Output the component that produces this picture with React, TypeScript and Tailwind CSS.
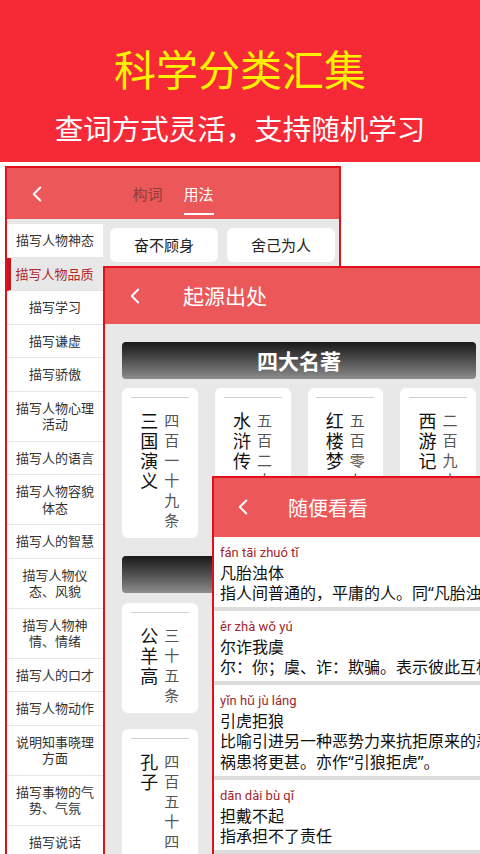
import { ChevronLeft } from 'lucide-react';

const sideItems: string[][] = [
  ['描写人物神态'],
  ['描写人物品质'],
  ['描写学习'],
  ['描写谦虚'],
  ['描写骄傲'],
  ['描写人物心理', '活动'],
  ['描写人的语言'],
  ['描写人物容貌', '体态'],
  ['描写人的智慧'],
  ['描写人物仪', '态、风貌'],
  ['描写人物神', '情、情绪'],
  ['描写人的口才'],
  ['描写人物动作'],
  ['说明知事晓理', '方面'],
  ['描写事物的气', '势、气氛'],
  ['描写说话'],
];

const usages = ['奋不顾身', '舍己为人', '见义勇为', '大公无私', '克己奉公', '刚正不阿'];

const classics = [
  { name: '三国演义', count: '四百一十九条' },
  { name: '水浒传', count: '五百二十一条' },
  { name: '红楼梦', count: '五百零七条' },
  { name: '西游记', count: '二百九十八条' },
];

const ancients = [
  { name: '公羊高', count: '三十五条' },
  { name: '左丘明', count: '三十八条' },
  { name: '墨子', count: '六十二条' },
  { name: '荀子', count: '九十条' },
  { name: '孔子', count: '四百五十四条' },
  { name: '孟子', count: '二百一十条' },
  { name: '庄子', count: '三百零六条' },
  { name: '韩非', count: '一百八十条' },
];

const randomWords = [
  { py: 'fán tāi zhuó tǐ', word: '凡胎浊体', def: ['指人间普通的，平庸的人。同“凡胎浊骨”。'] },
  { py: 'ěr zhà wǒ yú', word: '尔诈我虞', def: ['尔：你；虞、诈：欺骗。表示彼此互相欺骗。'] },
  {
    py: 'yǐn hǔ jù láng',
    word: '引虎拒狼',
    def: ['比喻引进另一种恶势力来抗拒原来的恶势力，结果', '祸患将更甚。亦作“引狼拒虎”。'],
  },
  { py: 'dān dài bù qǐ', word: '担戴不起', def: ['指承担不了责任'] },
];

function BookCard({ name, count }: { name: string; count: string }) {
  return (
    <div className="bg-white rounded-[6px] pt-[9px] pb-[8px]">
      <div className="mx-auto h-px w-[58px] bg-[#cfcfcf]" />
      <div className="mt-[12px] flex justify-center gap-[6px]">
        <div className="flex flex-col text-[18px] leading-[20px] text-[#111]">
          {[...name].map((c, i) => (
            <span key={i}>{c}</span>
          ))}
        </div>
        <div className="flex flex-col text-[15px] leading-[20px] text-[#555]">
          {[...count].map((c, i) => (
            <span key={i}>{c}</span>
          ))}
        </div>
      </div>
    </div>
  );
}

function SectionBar({ title }: { title: string }) {
  return (
    <div className="h-[37px] rounded-[4px] bg-gradient-to-b from-[#1a1a1a] to-[#8e8e8e] flex items-center justify-center text-white font-bold text-[21px]">
      {title}
    </div>
  );
}

export default function App() {
  return (
    <div className="w-[480px] h-[854px] overflow-hidden bg-white flex flex-col font-['Noto_Sans_CJK_SC',sans-serif]">
      {/* Banner */}
      <div className="h-[162px] shrink-0 bg-[#f52a36] flex flex-col items-center pt-[43px]">
        <div className="text-[42px] leading-[50px] text-[#fff200]">科学分类汇集</div>
        <div className="mt-[17px] text-[28.5px] leading-[36px] text-white">查词方式灵活，支持随机学习</div>
      </div>

      {/* Stacked screens */}
      <div className="relative flex-1">
        {/* Screen 1: 用法 */}
        <div className="absolute left-[5px] top-[4px] w-[336px] h-[700px] border-2 border-[#e3101b] bg-[#e8e8e8] flex flex-col">
          <div className="h-[51px] bg-[#ec5859] relative flex items-center justify-center gap-[21px] text-[15px] leading-[20px]">
            <ChevronLeft className="absolute left-[17px] top-[13px] w-[26px] h-[26px] text-white" strokeWidth={1.8} />
            <span className="text-[#8e3c3c]">构词</span>
            <span className="relative text-white">
              用法
              <span className="absolute left-0 top-[29px] w-[30px] h-[2px] bg-white" />
            </span>
          </div>
          <div className="flex flex-1">
            <div className="w-[96px] pt-[5px] flex flex-col">
              {sideItems.map((lines, i) => {
                const active = i === 1;
                return (
                  <div
                    key={i}
                    className={
                      active
                        ? 'bg-[#e8e8e8] border-l-4 border-[#c8161e] border-b border-b-[#e2e2e2] py-2 pr-[5px] text-[13px] leading-[16.5px] text-[#b3262c] text-center'
                        : 'bg-white border-b border-[#e6e6e6] py-2 px-[5px] text-[13px] leading-[16.5px] text-[#333] text-center'
                    }
                  >
                    {lines.map((l, j) => (
                      <div key={j}>{l}</div>
                    ))}
                  </div>
                );
              })}
            </div>
            <div className="flex-1 pt-[9px] pl-[7px] pr-[4px] grid grid-cols-2 gap-[9px] content-start">
              {usages.map((u) => (
                <div key={u} className="h-[34px] bg-white rounded-[6px] flex items-center justify-center text-[15px] text-[#222]">
                  {u}
                </div>
              ))}
            </div>
          </div>
        </div>

        {/* Screen 2: 起源出处 */}
        <div className="absolute left-[103px] top-[104px] w-[392px] h-[600px] border-2 border-[#e3101b] bg-[#e8e8e8]">
          <div className="h-[56px] bg-[#ec5859] relative flex items-center pl-[78px]">
            <ChevronLeft className="absolute left-[17px] top-[15px] w-[26px] h-[26px] text-white" strokeWidth={1.8} />
            <span className="text-white text-[21px]">起源出处</span>
          </div>
          <div className="px-[17px] pt-[18px]">
            <SectionBar title="四大名著" />
            <div className="mt-[9px] grid grid-cols-4 gap-x-[17px] gap-y-[16px] items-start">
              {classics.map((b) => (
                <BookCard key={b.name} {...b} />
              ))}
            </div>
            <div className="mt-[18px]">
              <SectionBar title="先秦诸子" />
            </div>
            <div className="mt-[10px] grid grid-cols-4 gap-x-[17px] gap-y-[16px] items-start">
              {ancients.map((b) => (
                <BookCard key={b.name} {...b} />
              ))}
            </div>
          </div>
        </div>

        {/* Screen 3: 随便看看 */}
        <div className="absolute left-[212px] top-[314px] w-[390px] h-[400px] border-2 border-[#e3101b] bg-[#dcdcdc]">
          <div className="h-[59px] bg-[#ec5859] relative flex items-center pl-[74px]">
            <ChevronLeft className="absolute left-[16px] top-[16px] w-[26px] h-[26px] text-white" strokeWidth={1.8} />
            <span className="text-white text-[20px]">随便看看</span>
          </div>
          <div className="flex flex-col gap-[4px]">
            {randomWords.map((w) => (
              <div key={w.word} className="bg-white pt-[7px] pb-[3px] px-[6px]">
                <div className="text-[13px] leading-[18px] text-[#a3262d] font-['Roboto','Noto_Sans',sans-serif]">{w.py}</div>
                <div className="text-[16px] leading-[21px] text-[#111]">{w.word}</div>
                {w.def.map((d, i) => (
                  <div
                    key={i}
                    className="text-[16px] leading-[21px] text-[#111] whitespace-nowrap font-['Noto_Sans','Noto_Sans_CJK_SC',sans-serif]"
                  >
                    {d}
                  </div>
                ))}
              </div>
            ))}
          </div>
        </div>
      </div>
    </div>
  );
}
